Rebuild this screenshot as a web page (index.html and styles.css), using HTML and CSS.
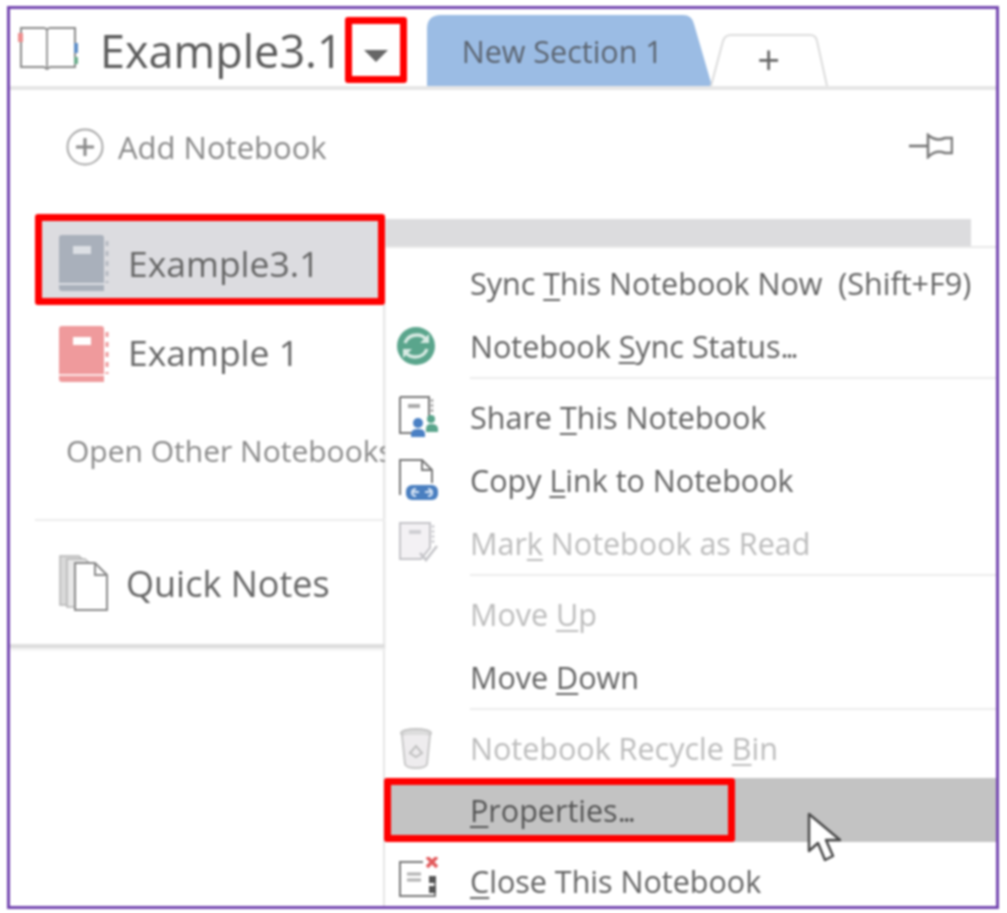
FILE: index.html
```html
<!DOCTYPE html>
<html lang="en">
<head>
<meta charset="utf-8">
<title>OneNote notebook menu</title>
<link rel="stylesheet" href="styles.css">
</head>
<body>
<div class="frame">
  <header class="topbar">
    <svg class="book-icon" width="62" height="50" viewBox="0 0 62 50"><path d="M4 5H27Q29 5 30 7Q31 5 33 5H58V44H33L30 46L27 44H4Z" fill="#fff" stroke="#8a8a8a" stroke-width="2"/><path d="M30 7V45" stroke="#9a9a9a" stroke-width="2"/><rect x="1" y="10" width="5" height="9" fill="#ee8f8f"/><rect x="57" y="20" width="4" height="10" fill="#5f8fc8"/><rect x="57" y="34" width="4" height="7" fill="#6fae8f"/></svg>
    <span class="title">Example3.1</span>
    <span class="chevron-box"><svg width="24" height="14" viewBox="0 0 24 14"><path d="M0 1H24L12 13Z" fill="#666"/></svg></span>
    <div class="tab-active">
      <svg class="tab-shape" width="285" height="71" viewBox="0 0 285 71"><path d="M0 71V14Q0 0 14 0H256Q265 0 267 9L285 71Z" fill="#9bbce4"/></svg>
      <span class="tab-label">New Section 1</span>
    </div>
    <div class="tab-add">
      <svg class="tab-shape" width="118" height="53" viewBox="0 0 118 53"><path d="M1 53L13 8Q15 2 21 2H100Q106 2 107 8L117 53" fill="#fff" stroke="#dcdcdc" stroke-width="2"/></svg>
      <span class="tab-plus">+</span>
    </div>
  </header>

  <div class="panel-head">
    <div class="add-notebook">
      <svg width="38" height="38" viewBox="0 0 38 38"><circle cx="19" cy="19" r="17.5" fill="none" stroke="#a8a8a8" stroke-width="2"/><path d="M19 10V28M10 19H28" stroke="#8a8a8a" stroke-width="3"/></svg>
      <span>Add Notebook</span>
    </div>
    <svg width="44" height="26" viewBox="0 0 44 26"><path d="M0 13H19" stroke="#6f6f6f" stroke-width="2.5"/><path d="M19 2Q27 9 36 5H43V20H36Q27 16 19 24Z" fill="#fff" stroke="#7a7a7a" stroke-width="2.5"/></svg>
  </div>

  <div class="panel-body">
    <aside class="list">
      <div class="nb-row nb-selected">
        <svg class="nb-icon" width="52" height="56" viewBox="0 0 52 56"><path d="M0 3Q0 0 3 0H42Q45 0 45 3V56H3Q0 56 0 53Z" fill="#a9b0bb"/><rect x="14" y="11" width="18" height="8" fill="#dcdfe4"/><path d="M0 49H45" stroke="#dcdfe4" stroke-width="2"/><path d="M48 6V48" stroke="#b5bac2" stroke-width="3" stroke-dasharray="5 5"/></svg>
        <span>Example3.1</span>
      </div>
      <div class="nb-row nb-plain">
        <svg class="nb-icon" width="52" height="56" viewBox="0 0 52 56"><path d="M0 3Q0 0 3 0H42Q45 0 45 3V56H3Q0 56 0 53Z" fill="#ef9a9c"/><rect x="14" y="11" width="18" height="8" fill="#fff"/><path d="M0 49H45" stroke="#fde6e6" stroke-width="2"/><path d="M48 6V48" stroke="#ef9a9c" stroke-width="3" stroke-dasharray="5 5"/></svg>
        <span>Example 1</span>
      </div>
      <div class="open-other">Open Other Notebooks</div>
      <div class="list-divider"></div>
      <div class="quick-notes">
        <svg class="nb-icon" width="50" height="56" viewBox="0 0 50 56"><path d="M1 1H20L30 10V50H1Z" fill="#d9d9d9" stroke="#b5b5b5" stroke-width="1.5"/><path d="M8 4H26L36 13V52H8Z" fill="#e8e8e8" stroke="#b5b5b5" stroke-width="1.5"/><path d="M16 8H36L48 20V55H16Z" fill="#fff" stroke="#8a8a8a" stroke-width="2"/><path d="M36 8V20H48" fill="none" stroke="#8a8a8a" stroke-width="2"/></svg>
        <span>Quick Notes</span>
      </div>
    </aside>

    <section class="menu-col">
      <div class="band"></div>
      <div class="menu">
        <div class="item first"><span class="ico"></span><span>Sync <u>T</u>his Notebook Now&nbsp; (Shift+F9)</span></div>
        <div class="item"><span class="ico"><svg class="ico-sync" width="40" height="40" viewBox="0 0 40 40"><circle cx="20" cy="20" r="19" fill="#5aa58c"/><path d="M9 17Q12 9 21 9Q27 9 31 14M31 23Q28 31 19 31Q13 31 9 26" fill="none" stroke="#d7eae3" stroke-width="3.5"/><path d="M33 8V17H24M7 32V23H16" fill="#d7eae3"/></svg></span><span>Notebook <u>S</u>ync Status<span class="dots">...</span></span></div>
        <div class="sep"></div>
        <div class="item"><span class="ico"><svg width="40" height="42" viewBox="0 0 40 42"><path d="M1 1H30V22M1 1V37H13" fill="none" stroke="#777" stroke-width="2"/><rect x="9" y="8" width="12" height="4" fill="#aaa"/><path d="M33 3V16" stroke="#aaa" stroke-width="2.5" stroke-dasharray="3 2"/><circle cx="19" cy="27" r="5" fill="#4a80c4"/><path d="M12 41V38Q12 33 19 33Q26 33 26 38V41Z" fill="#4a80c4"/><circle cx="32" cy="23" r="4" fill="#5aa58c"/><path d="M27 36V33Q27 28 32 28Q39 28 39 33V36Z" fill="#5aa58c"/></svg></span><span>Share <u>T</u>his Notebook</span></div>
        <div class="item"><span class="ico"><svg width="40" height="42" viewBox="0 0 40 42"><path d="M1 36V1H23L33 11V24" fill="none" stroke="#777" stroke-width="2"/><path d="M23 1V11H33" fill="none" stroke="#777" stroke-width="2"/><rect x="7" y="26" width="32" height="15" rx="6" fill="#4a7fc0"/><path d="M14 33H20M26 33H32M17 30Q13 30 13 33.500Q13 37 17 37M29 30Q33 30 33 33.500Q33 37 29 37" fill="none" stroke="#d8e5f5" stroke-width="2"/></svg></span><span>Copy <u>L</u>ink to Notebook</span></div>
        <div class="item off"><span class="ico"><svg width="40" height="42" viewBox="0 0 40 42"><path d="M1 1H31V26L22 37H1Z" fill="#f3f1f4" stroke="#c4c4c8" stroke-width="2"/><rect x="10" y="8" width="12" height="4" fill="#cfcfd3"/><path d="M34 3V22" stroke="#cfcfd3" stroke-width="2.5" stroke-dasharray="3 2"/><path d="M21 31L27 38L38 24" fill="none" stroke="#c4c4c8" stroke-width="2.500"/></svg></span><span>Mar<u>k</u> Notebook as Read</span></div>
        <div class="sep"></div>
        <div class="item off"><span class="ico"></span><span>Move <u>U</u>p</span></div>
        <div class="item"><span class="ico"></span><span>Move <u>D</u>own</span></div>
        <div class="sep"></div>
        <div class="item off"><span class="ico"><svg width="34" height="42" viewBox="0 0 34 42"><ellipse cx="17" cy="6" rx="15" ry="4" fill="#ddd" stroke="#c4c4c4" stroke-width="2"/><path d="M3 8L6 37Q7 41 17 41Q27 41 28 37L31 8" fill="#eeecee" stroke="#c8c8c8" stroke-width="2"/><path d="M11 26L17 19L23 26L17 30Z" fill="none" stroke="#c0c0c0" stroke-width="2"/></svg></span><span>Notebook Recycle <u>B</u>in</span></div>
        <div class="item active"><span class="ico"></span><span><u>P</u>roperties<span class="dots">...</span></span><span class="red-box"></span>
          <svg class="cursor" width="36" height="52" viewBox="0 0 36 52"><path d="M2 2V39L11 31L18 48L26 44L19 28H33Z" fill="#fff" stroke="#4a4a4a" stroke-width="2.500" stroke-linejoin="round"/></svg>
        </div>
        <div class="item close"><span class="ico"><svg class="ico-close" width="40" height="42" viewBox="0 0 40 42"><path d="M24 5H1V39H36V22" fill="#fff" stroke="#777" stroke-width="2"/><path d="M8 17H22M8 23H22" stroke="#b0b0b0" stroke-width="3"/><path d="M28 0L38 10M38 0L28 10" stroke="#e2595b" stroke-width="3.500"/><rect x="30" y="19" width="7" height="7" fill="#555"/><rect x="30" y="29" width="7" height="7" fill="#555"/></svg></span><span><u>C</u>lose This Notebook</span></div>
      </div>
    </section>
  </div>
</div>
</body>
</html>
```
FILE: styles.css
```css
* { box-sizing: border-box; }
html, body { margin: 0; height: 100%; background: #fff; overflow: hidden; }
body { padding: 6px 8px 4px 7px; font-family: "Open Sans", "Noto Sans", sans-serif; color: #666; }
u { text-underline-offset: 4px; text-decoration-thickness: 2px; }
.dots { letter-spacing: -3px; }

.frame {
  width: 992px; height: 903px;
  border: 3px solid #7446b0;
  background: #fff;
  overflow: hidden;
  display: flex; flex-direction: column;
  filter: blur(0.9px);
}

.topbar {
  height: 81px; flex: none;
  display: flex; align-items: flex-end;
  border-bottom: 4px solid #e6e6e6;
  position: relative;
}
.book-icon { align-self: flex-start; margin: 14px 0 0 7px; flex: none; }
.title { align-self: flex-start; margin: 8px 0 0 21px; font-size: 45px; line-height: 68px; color: #5a5a5a; white-space: nowrap; }
.chevron-box {
  align-self: flex-start; margin: 8px 0 0 2px; flex: none;
  width: 62px; height: 66px;
  border: 7px solid #f00; border-radius: 3px;
  display: flex; align-items: center; justify-content: center;
  padding-top: 11px;
}
.tab-active { position: relative; width: 285px; height: 71px; margin-left: 20px; flex: none; display: flex; align-items: center; padding-left: 35px; }
.tab-add { position: relative; width: 118px; height: 53px; flex: none; display: flex; justify-content: center; align-items: center; margin-left: -2px; }
.tab-shape { position: absolute; left: 0; top: 0; }
.tab-label { position: relative; font-size: 30.5px; color: #5b6470; white-space: nowrap; }
.tab-plus { position: relative; font-size: 40px; line-height: 1; color: #666; }

.panel-head { height: 124px; flex: none; display: flex; justify-content: space-between; align-items: flex-start; padding: 37px 43px 0 56px; }
.panel-head > svg { margin-top: 6px; }
.add-notebook { display: flex; align-items: center; gap: 14px; font-size: 31px; color: #8a8a8a; height: 40px; }

.panel-body { display: flex; flex: 1; min-height: 0; }
.list { width: 375px; height: 434px; flex: none; border-bottom: 4px solid #dedede; box-shadow: 0 2px 3px #eee; position: relative; z-index: 1; }
.nb-row { display: flex; align-items: center; margin-left: 25px; font-size: 35.5px; color: #666; white-space: nowrap; }
.nb-row span, .quick-notes span { margin-left: 17px; }
.nb-icon { flex: none; }
.nb-selected { height: 91px; border: 7px solid #f00; border-radius: 3px; background: #dcdce0; padding: 6px 0 0 17px; }
.nb-plain { height: 92px; margin-top: 3px; padding-left: 24px; }
.nb-plain span { padding-bottom: 4px; }
.open-other { height: 102px; padding-left: 56px; font-size: 30px; line-height: 102px; color: #8a8a8a; white-space: nowrap; overflow: hidden; }
.list-divider { height: 2px; margin: 17px 0 0 25px; background: #ececec; }
.quick-notes { height: 120px; padding: 4px 0 0 49px; display: flex; align-items: center; font-size: 36px; color: #666; white-space: nowrap; }

.menu-col { flex: 1; min-width: 0; margin-left: -2px; padding-top: 5px; display: flex; flex-direction: column; }
.band { height: 27px; flex: none; margin-right: 25px; background: #dcdcde; }
.menu { flex: 1; border-left: 2px solid #e6e6e6; border-top: 2px solid #e8e8e8; font-size: 30.5px; color: #636363; padding-top: 3px; }
.item { height: 63px; display: flex; align-items: center; white-space: nowrap; position: relative; }
.ico { width: 85px; flex: none; padding-left: 14px; display: flex; align-items: center; }
.ico-sync { margin-left: -3px; }
.ico-close { margin-top: -6px; }
.off { color: #bcbcbc; }
.sep { height: 2px; margin: 0 0 6px 85px; background: #ececec; }
.active { background: #c3c3c3; height: 64px; margin-top: -1px; color: #555; }
.close { margin-top: 7px; }
.red-box { position: absolute; left: -1px; top: 0; width: 351px; height: 64px; border: 7px solid #f00; border-radius: 3px; }
.cursor { position: absolute; left: 422px; top: 34px; }
```
